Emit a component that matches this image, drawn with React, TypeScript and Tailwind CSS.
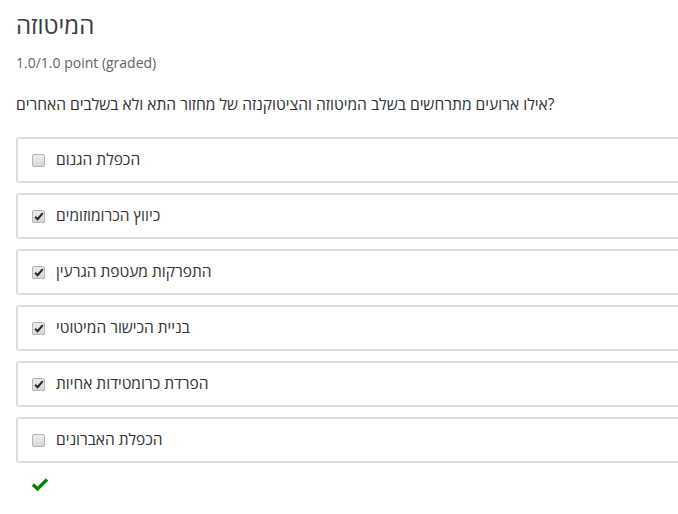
import React from "react";

const options = [
  { label: "הכפלת הגנום", checked: false },
  { label: "כיווץ הכרומוזומים", checked: true },
  { label: "התפרקות מעטפת הגרעין", checked: true },
  { label: "בניית הכישור המיטוטי", checked: true },
  { label: "הפרדת כרומטידות אחיות", checked: true },
  { label: "הכפלת האברונים", checked: false },
];

function Box({ checked }: { checked: boolean }) {
  return (
    <span className="w-[13px] h-[13px] shrink-0 rounded-[2px] border border-[#b4b4b4] bg-gradient-to-b from-[#eeeeee] to-[#d6d6d6] flex items-center justify-center">
      {checked && (
        <svg width="10" height="9" viewBox="0 0 10 9">
          <path d="M1.2 4.8 L3.6 7.2 L8.8 1.2" stroke="#222" strokeWidth="2" fill="none" />
        </svg>
      )}
    </span>
  );
}

export default function App() {
  return (
    <div className="w-[678px] h-[514px] overflow-hidden bg-white" style={{ fontFamily: '"Open Sans", "Noto Sans", sans-serif' }}>
      <div className="w-[740px] pl-4 pt-[8px]">
        <h2 className="text-[24px] leading-[34px] text-[#3c3c3c]">המיטוזה</h2>
        <div className="mt-[11px] text-[14px] leading-5 text-[#646464]">1.0/1.0 point (graded)</div>
        <p className="mt-[21px] text-[15.6px] leading-5 text-[#313131]">אילו ארועים מתרחשים בשלב המיטוזה והציטוקנזה של מחזור התא ולא בשלבים האחרים?</p>
        <div className="mt-[23px] flex flex-col gap-[10px]">
          {options.map((o) => (
            <label key={o.label} className="h-[46px] border-2 border-[#dedede] rounded-[3px] flex items-center pl-[14px] gap-[11px]">
              <Box checked={o.checked} />
              <span className="text-[15.5px] text-[#313131]">{o.label}</span>
            </label>
          ))}
        </div>
        <div className="mt-[14px] pl-[15px]">
          <svg width="18" height="14" viewBox="0 0 18 14">
            <path d="M2 7.5 L6.5 12 L16 2.5" stroke="#008100" strokeWidth="3.2" fill="none" />
          </svg>
        </div>
      </div>
    </div>
  );
}
